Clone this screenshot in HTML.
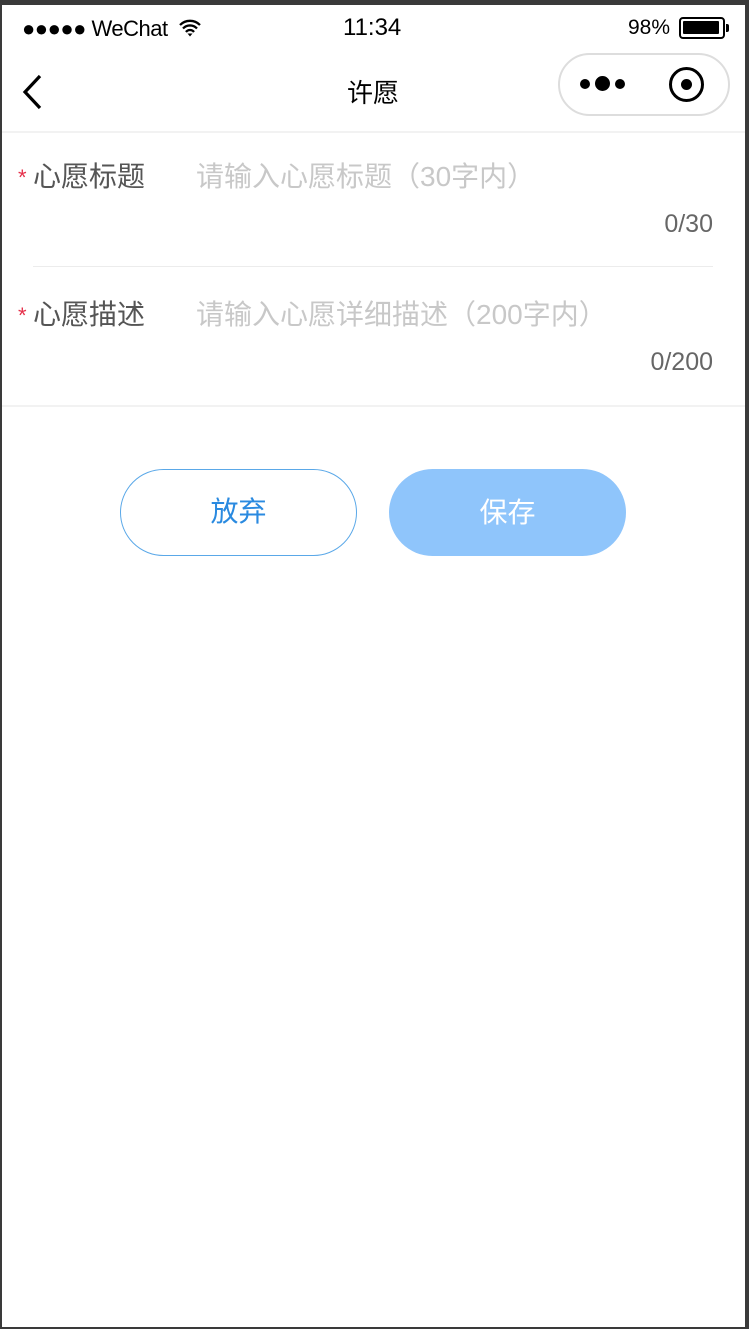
<!DOCTYPE html>
<html><head><meta charset="utf-8"><style>
*{margin:0;padding:0;box-sizing:border-box}
body{width:749px;height:1329px;background:#3a3a3a;font-family:"Liberation Sans","Noto Sans CJK SC",sans-serif;position:relative;overflow:hidden}
.scr{position:absolute;left:2px;top:5px;width:743px;height:1322px;background:#fff}
.a{position:absolute;white-space:nowrap}
.lbl{font-size:28px;color:#555}
.star{color:#e5304a;font-size:22px}
.ph{font-size:28px;color:#c8c8c8}
.cnt{font-size:25px;color:#666}
</style></head><body>
<div class="scr">
<div class="a" style="left:20px;top:11px;font-size:22px;color:#000;letter-spacing:-0.5px">●●●●● WeChat</div>
<svg class="a" style="left:177px;top:14px" width="22" height="18" viewBox="0 0 22 18"><path d="M1 6a14 14 0 0 1 20 0M4 9.5a9.5 9.5 0 0 1 14 0M7 13a5 5 0 0 1 8 0" fill="none" stroke="#000" stroke-width="2.3"/><path d="M8.5 14.5L11 17.5 13.5 14.5z" fill="#000"/></svg>
<div class="a" style="left:341px;top:9px;font-size:24px;color:#000">11:34</div>
<div class="a" style="left:626px;top:11px;font-size:21px;color:#000">98%</div>
<div class="a" style="left:677px;top:12px;width:46px;height:22px;border:2.5px solid #000;border-radius:4px;padding:2px"><div style="width:36px;height:13px;background:#000;border-radius:1px"></div></div>
<div class="a" style="left:724px;top:19px;width:3px;height:8px;background:#000;border-radius:0 2px 2px 0"></div>
<svg class="a" style="left:18px;top:68px" width="26" height="38" viewBox="0 0 26 38"><path d="M20 3L5 19 20 35" fill="none" stroke="#000" stroke-width="3.2"/></svg>
<div class="a" style="left:345px;top:68px;font-size:26px;color:#000">许愿</div>
<div class="a" style="left:556px;top:48px;width:172px;height:63px;border:2px solid #ddd;border-radius:32px"></div>
<div class="a" style="left:578px;top:74px;width:10px;height:10px;border-radius:50%;background:#000"></div>
<div class="a" style="left:593px;top:71px;width:15px;height:15px;border-radius:50%;background:#000"></div>
<div class="a" style="left:613px;top:74px;width:10px;height:10px;border-radius:50%;background:#000"></div>
<div class="a" style="left:667px;top:62px;width:35px;height:35px;border-radius:50%;border:3.5px solid #000"></div>
<div class="a" style="left:679px;top:74px;width:11px;height:11px;border-radius:50%;background:#000"></div>
<div class="a" style="left:0;top:126px;width:743px;height:2px;background:#f2f2f2"></div>
<div class="a star" style="left:16px;top:160px">*</div>
<div class="a lbl" style="left:31px;top:150px">心愿标题</div>
<div class="a ph" style="left:194px;top:150px">请输入心愿标题（30字内）</div>
<div class="a cnt" style="right:32px;top:205px">0/30</div>
<div class="a" style="left:31px;top:261px;width:680px;height:1px;background:#ececec"></div>
<div class="a star" style="left:16px;top:298px">*</div>
<div class="a lbl" style="left:31px;top:288px">心愿描述</div>
<div class="a ph" style="left:194px;top:288px">请输入心愿详细描述（200字内）</div>
<div class="a cnt" style="right:32px;top:343px">0/200</div>
<div class="a" style="left:0;top:400px;width:743px;height:2px;background:#f2f2f2"></div>
<div class="a" style="left:118px;top:464px;width:237px;height:87px;border:1.5px solid #5aa8e8;border-radius:44px;text-align:center;line-height:84px;font-size:28px;color:#2a8ae0">放弃</div>
<div class="a" style="left:387px;top:464px;width:237px;height:87px;background:#8fc5fb;border-radius:44px;text-align:center;line-height:87px;font-size:28px;color:#fff">保存</div>
</div>
</body></html>
